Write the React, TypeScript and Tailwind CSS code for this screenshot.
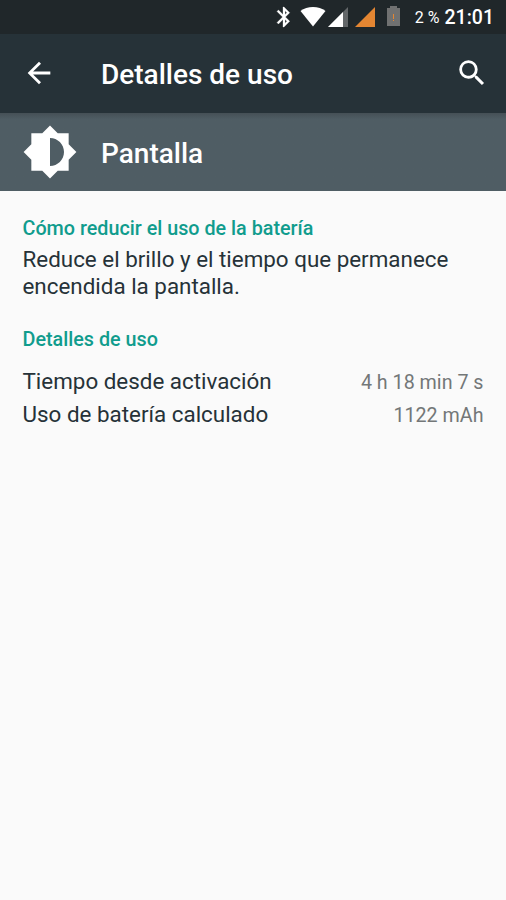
const details = [
  { label: "Tiempo desde activación", value: "4 h 18 min 7 s" },
  { label: "Uso de batería calculado", value: "1122 mAh" },
];

function StatusBar() {
  return (
    <div className="flex h-[34px] items-center justify-end bg-[#20272a] pr-[12px] text-white">
      <svg className="mr-[4px] h-6 w-6" viewBox="0 0 24 24" fill="currentColor" stroke="currentColor" strokeWidth="0.3">
        <path d="M17.71 7.71 12 2h-1v7.59L6.41 5 5 6.41 10.59 12 5 17.59 6.41 19 11 14.41V22h1l5.71-5.71-4.3-4.29 4.3-4.29zM13 5.83l1.88 1.88L13 9.59V5.83zm1.88 10.46L13 18.17v-3.76l1.88 1.88z" />
      </svg>
      <svg className="h-5 w-[26px]" viewBox="0 0 26 20" fill="currentColor">
        <path d="M.5 4C7-1.3 19-1.3 25.5 4L13 19.5z" />
      </svg>
      <svg className="ml-[2px] h-5 w-5" viewBox="0 0 20 20">
        <path d="M0 20 20 0v20z" fill="#636769" />
        <path d="M0 20 15 5v15z" fill="#fff" />
      </svg>
      <svg className="ml-[7px] h-5 w-5" viewBox="0 0 20 20">
        <path d="M0 20 20 0v20z" fill="#e48632" />
      </svg>
      <svg className="mb-[2px] ml-[12px] h-5 w-[13px]" viewBox="0 0 13 20">
        <path d="M0 2h3V0h7v2h3v18H0z" fill="#707171" />
        <path d="M6 8h1v5H6zM6 14h1v1H6z" fill="#e48632" />
      </svg>
      <span className="ml-[15px] pt-[2px] text-base">2 %</span>
      <span className="ml-[5px] pt-[2px] text-[19.5px] font-medium">21:01</span>
    </div>
  );
}

export default function App() {
  return (
    <div className="flex h-[900px] w-[506px] flex-col bg-[#fafafa] font-['Roboto',sans-serif] text-[#263238]">
      <StatusBar />
      <header className="flex h-[79px] items-center bg-[#263238] text-white">
        <svg className="mb-px ml-[22px] h-[34px] w-[34px]" viewBox="0 0 24 24" fill="currentColor">
          <path d="M20 11H7.83l5.59-5.59L12 4l-8 8 8 8 1.41-1.41L7.83 13H20v-2z" />
        </svg>
        <h1 className="ml-[45px] flex-1 pt-[2px] text-[28px] font-medium">Detalles de uso</h1>
        <svg className="mr-[17px] mb-px h-[34px] w-[34px]" viewBox="0 0 24 24" fill="currentColor">
          <path d="M15.5 14h-.79l-.28-.27A6.47 6.47 0 0 0 16 9.5 6.5 6.5 0 1 0 9.5 16c1.61 0 3.09-.59 4.23-1.57l.27.28v.79l5 4.99L20.49 19l-4.99-5zm-6 0C7.01 14 5 11.99 5 9.5S7.01 5 9.5 5 14 7.01 14 9.5 11.99 14 9.5 14z" />
        </svg>
      </header>
      <section className="flex h-[78px] items-center bg-[#4f5d64] bg-linear-to-b from-[#455056] to-[#4f5d64] to-8% text-white">
        <svg className="ml-[22px] h-14 w-14" viewBox="0 0 24 24" fill="currentColor">
          <path d="M20 15.31 23.31 12 20 8.69V4h-4.69L12 .69 8.69 4H4v4.69L.69 12 4 15.31V20h4.69L12 23.31 15.31 20H20v-4.69zM12 18V6c3.31 0 6 2.69 6 6s-2.69 6-6 6z" />
        </svg>
        <h2 className="ml-[23px] pt-[4px] text-[28px] font-medium">Pantalla</h2>
      </section>
      <main className="px-[22.5px] pt-[25px]">
        <h3 className="text-[19.75px] leading-[26px] font-medium text-[#109c8d]">Cómo reducir el uso de la batería</h3>
        <p className="mt-[4px] text-[22.4px] leading-[27px]">
          Reduce el brillo y el tiempo que permanece
          <br />
          encendida la pantalla.
        </p>
        <h3 className="mt-[27px] text-[19.75px] leading-[26px] font-medium text-[#109c8d]">Detalles de uso</h3>
        <dl className="mt-[13px]">
          {details.map((item) => (
            <div key={item.label} className="flex h-[33px] items-center justify-between">
              <dt className="pb-[2px] text-[22.4px]">{item.label}</dt>
              <dd className="text-[19.7px] text-[#737778]">{item.value}</dd>
            </div>
          ))}
        </dl>
      </main>
    </div>
  );
}
